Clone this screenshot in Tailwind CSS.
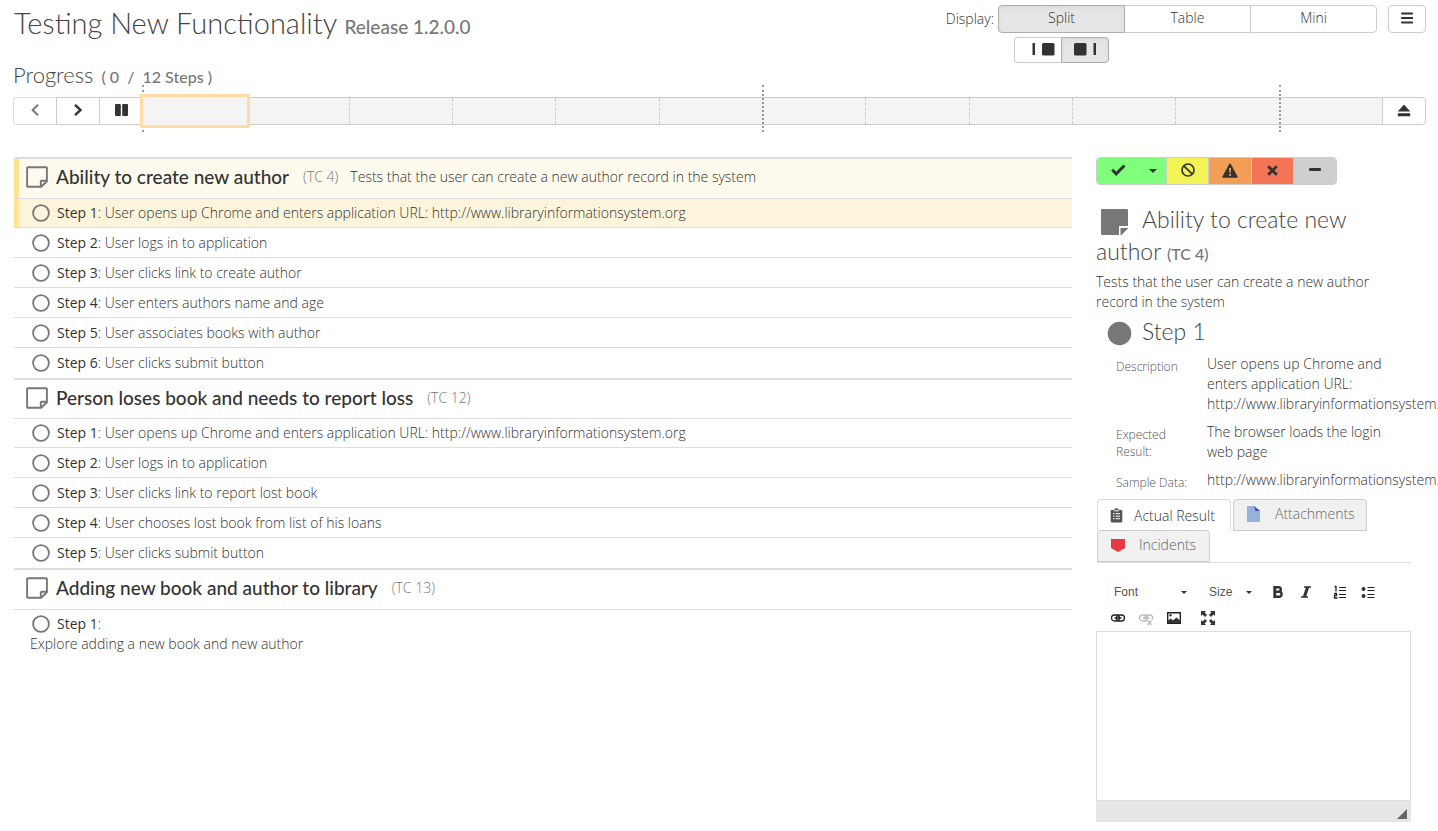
<!DOCTYPE html>
<html lang="en">
<head>
<meta charset="utf-8">
<meta name="viewport" content="width=device-width, initial-scale=1">
<title>Testing New Functionality</title>
<script src="https://cdn.jsdelivr.net/npm/@tailwindcss/browser@4"></script>
</head>
<body class="overflow-x-hidden bg-white font-['Open_Sans',sans-serif] text-sm leading-5 font-light text-[#333]">
<svg class="hidden" aria-hidden="true">
  <symbol id="note" viewBox="0 0 22 22"><path d="M2 1.200h18a.9.9 0 0 1 .9.9v13.200L15.300 20.800H2a.9.9 0 0 1-.9-.9V2.100a.9.9 0 0 1 .9-.9zM20.500 14.700h-4.800a.9.9 0 0 0-.9.9v4.800" fill="none" stroke="#777" stroke-width="1.900"/></symbol>
  <symbol id="ring" viewBox="0 0 18 18"><circle cx="9" cy="9" r="7.900" fill="none" stroke="#777" stroke-width="1.800"/></symbol>
</svg>

<header class="flex items-start justify-between pt-[5px] pr-3 pl-3.5">
  <h1 class="font-['Lato',sans-serif] text-[29px] leading-9 font-light text-[#444]">Testing New Functionality <small class="text-[19px] leading-none font-medium text-[#777]">Release 1.2.0.0</small></h1>
  <div class="flex items-start gap-[11px]">
    <div class="flex items-start gap-1">
      <span class="pt-1">Display:</span>
      <div>
        <div class="flex w-[379px]">
          <button class="h-7 flex-1 rounded-l border border-[#adadad] bg-[#e6e6e6] pb-0.5 inset-shadow-sm">Split</button>
          <button class="h-7 flex-1 border-y border-[#ccc] pb-0.5">Table</button>
          <button class="h-7 flex-1 rounded-r border border-[#ccc] pb-0.5">Mini</button>
        </div>
        <div class="mt-1 ml-4 flex">
          <button aria-label="Details on the left" class="flex h-[26px] w-[47px] items-center justify-end rounded-l border border-r-0 border-[#ccc] pr-1.5 pb-0.5"><svg width="24" height="14" viewBox="0 0 24 14" fill="#333"><path d="M1.500 1h2.500v12H1.500z"/><rect x="11" y="1" width="12.500" height="12.500" rx="1.500"/></svg></button>
          <button aria-label="Details on the right" class="flex h-[26px] w-12 items-center justify-center rounded-r border border-[#adadad] bg-[#e6e6e6] pb-0.5 inset-shadow-sm"><svg width="24" height="14" viewBox="0 0 24 14" fill="#333"><path d="M20.500 1h2.500v12h-2.500z"/><rect x="1" y="1" width="12.500" height="12.500" rx="1.500"/></svg></button>
        </div>
      </div>
    </div>
    <button aria-label="Menu" class="flex h-7 w-[38px] items-center justify-center rounded border border-[#ccc] pb-0.5"><svg width="12" height="12" viewBox="0 0 12 12" stroke="#333" stroke-width="2" stroke-linecap="round"><path d="M1 1.500h10.300M1 6h10.300M1 10.500h10.300"/></svg></button>
  </div>
</header>

<section class="pr-3 pl-[13px]">
  <h2 class="font-['Lato',sans-serif] text-[22px] leading-6 font-light text-[#444]">Progress <small class="ml-0.5 text-base leading-none font-medium whitespace-pre text-[#777]">( 0  /  12 Steps )</small></h2>
  <div class="mt-2.5 flex h-7">
    <button aria-label="Previous" class="flex w-[43px] items-center justify-center rounded-l border border-r-0 border-[#ddd] pb-0.5"><svg width="8" height="12" viewBox="0 0 8 12" fill="none" stroke="#777" stroke-width="2"><path d="M7 .8 1.600 6 7 11.200"/></svg></button>
    <button aria-label="Next" class="flex w-[43px] items-center justify-center border border-r-0 border-[#ccc] pb-0.5"><svg width="8" height="12" viewBox="0 0 8 12" fill="none" stroke="#333" stroke-width="2.400"><path d="M1 .8 6.400 6 1 11.200"/></svg></button>
    <button aria-label="Pause" class="flex w-[43px] items-center justify-center border border-r-0 border-[#ccc] pb-0.5"><svg width="13" height="12" viewBox="0 0 13 12" fill="#333"><rect width="5.800" height="12" rx="1"/><rect x="7.200" width="5.800" height="12" rx="1"/></svg></button>
    <div class="grid flex-1 grid-cols-12 border-y border-[#ccc] bg-[#f4f4f4]">
      <div class="relative">
        <span class="absolute -top-[13px] -bottom-2 left-0 border-l-2 border-dotted border-[#999]"></span>
        <span class="absolute -inset-y-1 -right-[5px] -left-0.5 border-[3px] border-[#ffdba6] bg-[#f4f4f4]"></span>
      </div>
      <div></div>
      <div class="border-l border-dashed border-[#ccc]"></div>
      <div class="border-l border-dashed border-[#ccc]"></div>
      <div class="border-l border-dashed border-[#ccc]"></div>
      <div class="border-l border-dashed border-[#ccc]"></div>
      <div class="relative"><span class="absolute -top-[13px] -bottom-2 left-0 border-l-2 border-dotted border-[#999]"></span></div>
      <div class="border-l border-dashed border-[#ccc]"></div>
      <div class="border-l border-dashed border-[#ccc]"></div>
      <div class="border-l border-dashed border-[#ccc]"></div>
      <div class="border-l border-dashed border-[#ccc]"></div>
      <div class="relative"><span class="absolute -top-[13px] -bottom-2 left-0 border-l-2 border-dotted border-[#999]"></span></div>
    </div>
    <button aria-label="Finish" class="flex w-11 items-center justify-center rounded-r border border-[#ccc] pb-0.5"><svg width="14" height="13" viewBox="0 0 14 13" fill="#333"><path d="M7 .5 13.200 7.500H.8z"/><rect x=".8" y="9.200" width="12.400" height="3" rx=".5"/></svg></button>
  </div>
</section>

<main class="mt-8 flex gap-6 pl-3.5">
  <div class="min-w-0 flex-1">
    <section>
      <div class="flex h-[41px] items-center border-t-2 border-[#ddd] bg-[#fefaee] pb-1 shadow-[inset_5px_0_0_#fbe594]">
        <svg class="ml-3 size-[22px]"><use href="#note"/></svg>
        <h3 class="ml-2 font-['Lato',sans-serif] text-[19px] leading-5 font-medium">Ability to create new author</h3>
        <span class="ml-3.5 text-[#777]">(TC 4)</span><span class="ml-3">Tests that the user can create a new author record in the system</span>
      </div>
      <ol>
        <li class="flex h-[30px] items-center gap-[7px] border-y border-[#ddd] bg-[#fdf5db] pl-[18px] shadow-[inset_5px_0_0_#fbe594]"><svg class="size-[18px]"><use href="#ring"/></svg><p><b class="font-normal">Step 1</b>: User opens up Chrome and enters application URL: http://www.libraryinformationsystem.org</p></li>
        <li class="flex h-[30px] items-center gap-[7px] border-b border-[#ddd] pl-[18px]"><svg class="size-[18px]"><use href="#ring"/></svg><p><b class="font-normal">Step 2</b>: User logs in to application</p></li>
        <li class="flex h-[30px] items-center gap-[7px] border-b border-[#ddd] pl-[18px]"><svg class="size-[18px]"><use href="#ring"/></svg><p><b class="font-normal">Step 3</b>: User clicks link to create author</p></li>
        <li class="flex h-[30px] items-center gap-[7px] border-b border-[#ddd] pl-[18px]"><svg class="size-[18px]"><use href="#ring"/></svg><p><b class="font-normal">Step 4</b>: User enters authors name and age</p></li>
        <li class="flex h-[30px] items-center gap-[7px] border-b border-[#ddd] pl-[18px]"><svg class="size-[18px]"><use href="#ring"/></svg><p><b class="font-normal">Step 5</b>: User associates books with author</p></li>
        <li class="flex h-[30px] items-center gap-[7px] pl-[18px]"><svg class="size-[18px]"><use href="#ring"/></svg><p><b class="font-normal">Step 6</b>: User clicks submit button</p></li>
      </ol>
    </section>
    <section>
      <div class="flex h-10 items-center border-t-2 border-[#ddd] pb-0.5">
        <svg class="ml-3 size-[22px]"><use href="#note"/></svg>
        <h3 class="ml-2 font-['Lato',sans-serif] text-[19px] leading-5 font-medium">Person loses book and needs to report loss</h3>
        <span class="ml-3.5 text-[#777]">(TC 12)</span>
      </div>
      <ol>
        <li class="flex h-[30px] items-center gap-[7px] border-y border-[#ddd] pl-[18px]"><svg class="size-[18px]"><use href="#ring"/></svg><p><b class="font-normal">Step 1</b>: User opens up Chrome and enters application URL: http://www.libraryinformationsystem.org</p></li>
        <li class="flex h-[30px] items-center gap-[7px] border-b border-[#ddd] pl-[18px]"><svg class="size-[18px]"><use href="#ring"/></svg><p><b class="font-normal">Step 2</b>: User logs in to application</p></li>
        <li class="flex h-[30px] items-center gap-[7px] border-b border-[#ddd] pl-[18px]"><svg class="size-[18px]"><use href="#ring"/></svg><p><b class="font-normal">Step 3</b>: User clicks link to report lost book</p></li>
        <li class="flex h-[30px] items-center gap-[7px] border-b border-[#ddd] pl-[18px]"><svg class="size-[18px]"><use href="#ring"/></svg><p><b class="font-normal">Step 4</b>: User chooses lost book from list of his loans</p></li>
        <li class="flex h-[30px] items-center gap-[7px] pl-[18px]"><svg class="size-[18px]"><use href="#ring"/></svg><p><b class="font-normal">Step 5</b>: User clicks submit button</p></li>
      </ol>
    </section>
    <section>
      <div class="flex h-[41px] items-center border-t-2 border-[#ddd] pb-1">
        <svg class="ml-3 size-[22px]"><use href="#note"/></svg>
        <h3 class="ml-2 font-['Lato',sans-serif] text-[19px] leading-5 font-medium">Adding new book and author to library</h3>
        <span class="ml-3.5 text-[#777]">(TC 13)</span>
      </div>
      <ol>
        <li class="border-t border-[#ddd] pt-1">
          <div class="flex items-center gap-[7px] pl-[18px]"><svg class="size-[18px]"><use href="#ring"/></svg><p><b class="font-normal">Step 1</b>:</p></div>
          <p class="pl-4">Explore adding a new book and new author</p>
        </li>
      </ol>
    </section>
  </div>

  <aside class="w-[342px] shrink-0 pr-[27px]">
    <div class="flex h-7 w-[241px] overflow-hidden rounded border border-[#ccc]">
      <button aria-label="Pass" class="flex w-[43px] items-center justify-center border-r border-[#ccc] bg-[#80ff7c] pb-0.5"><svg width="15" height="12" viewBox="0 0 15 12" fill="none" stroke="#333" stroke-width="3"><path d="m1.200 5.800 4 4L13.500 1.500"/></svg></button>
      <button aria-label="More pass options" class="flex w-[27px] items-center justify-center border-r border-[#ccc] bg-[#80ff7c]"><svg width="8" height="4" fill="#333"><path d="M0 0h8L4 4z"/></svg></button>
      <button aria-label="Block" class="flex w-[42px] items-center justify-center border-r border-[#ccc] bg-[#f4f356] pb-0.5"><svg width="14" height="14" viewBox="0 0 14 14" fill="none" stroke="#333" stroke-width="1.700"><circle cx="7" cy="7" r="6"/><path d="m2.800 2.800 8.400 8.400"/></svg></button>
      <button aria-label="Caution" class="flex w-[43px] items-center justify-center border-r border-[#ccc] bg-[#f29e56] pb-0.5"><svg width="16" height="15" viewBox="0 0 16 15"><path d="M8 1.200 15 14H1z" fill="#333" stroke="#333" stroke-width="1.500" stroke-linejoin="round"/><path d="M7 5h2l-.4 5H7.400zM7 11h2v1.800H7z" fill="#f29e56"/></svg></button>
      <button aria-label="Fail" class="flex w-[42px] items-center justify-center border-r border-[#ccc] bg-[#f47457] pb-0.5"><svg width="11" height="11" viewBox="0 0 11 11" stroke="#333" stroke-width="2.700"><path d="m1.200 1.200 8.600 8.600M9.800 1.200 1.200 9.800"/></svg></button>
      <button aria-label="Not applicable" class="flex flex-1 items-center justify-center bg-[#cfcfcf] pb-1"><svg width="12" height="3" fill="#333"><rect width="12" height="3" rx="1"/></svg></button>
    </div>

    <h2 class="mt-[19px] font-['Lato',sans-serif] text-[23px] leading-[30px] font-light text-[#444]"><svg class="mr-3.5 ml-1 inline-block align-middle" width="28" height="28" viewBox="0 0 28 28" fill="#777"><path d="M2 1h25a1 1 0 0 1 1 1v16h-9v9H2a1 1 0 0 1-1-1V2a1 1 0 0 1 1-1zM20.500 20H28v.5L21.500 27h-1z"/></svg>Ability to create new author <small class="text-base leading-none font-medium text-[#777]">(TC 4)</small></h2>
    <p class="mt-1.5">Tests that the user can create a new author record in the system</p>
    <h2 class="mt-1 flex items-center font-['Lato',sans-serif] text-[23px] leading-[30px] font-light text-[#444]"><svg class="mt-1 mr-2.5 ml-[11px]" width="25" height="25" viewBox="0 0 25 25"><circle cx="12.500" cy="12.500" r="11.800" fill="#777"/></svg>Step 1</h2>
    <dl class="mt-2 grid grid-cols-[75px_1fr] gap-x-4 gap-y-2 pl-5">
      <dt class="pt-1 text-xs leading-[17px] text-[#555]">Description</dt>
      <dd class="w-[187px]">User opens up Chrome and enters application URL: http://www.libraryinformationsystem.org</dd>
      <dt class="pt-1 text-xs leading-[17px] text-[#555]">Expected Result:</dt>
      <dd class="w-[187px]">The browser loads the login web page</dd>
      <dt class="pt-1 text-xs leading-[17px] text-[#555]">Sample Data:</dt>
      <dd class="w-[187px]">http://www.libraryinformationsystem.org</dd>
    </dl>

    <nav role="tablist" class="mt-2 ml-px flex flex-wrap gap-x-0.5 border-b border-[#ddd]">
      <button role="tab" aria-selected="true" class="flex h-8 w-[134px] items-center gap-[11px] rounded-t border border-b-0 border-[#ddd] pl-3 text-[#333]"><svg width="13" height="15" viewBox="0 0 13 15"><path d="M1.500 2H4a2.500 1.800 0 0 1 5 0h2.500a.8.8 0 0 1 .8.8v11a.8.8 0 0 1-.8.800h-10a.8.8 0 0 1-.8-.8v-11a.8.8 0 0 1 .8-.8z" fill="#555"/><path d="M3 5.700h1.500M5.500 5.700H10M3 8.200h1.500M5.500 8.200H10M3 10.700h1.500M5.500 10.700H10M4 2.800h5" stroke="#fff"/></svg>Actual Result</button>
      <button role="tab" aria-selected="false" class="flex h-8 w-[134px] items-center gap-3.5 rounded-t border border-[#ccc] bg-[#f1f1f1] pb-0.5 pl-3 text-[#666]"><svg width="15" height="16" viewBox="0 0 15 16"><path d="M1 0h7l6 5v11H1z" fill="#97b3dc"/><path d="m8 0 6 5H9.500z" fill="#4a41bd"/></svg>Attachments</button>
      <button role="tab" aria-selected="false" class="-mt-px flex h-8 w-[113px] items-center gap-3.5 rounded-t border border-[#ccc] bg-[#f1f1f1] pb-0.5 pl-[13px] text-[#666]"><svg width="14" height="14" viewBox="0 0 14 14"><path d="M0 1h14v9l-7 4-7-4z" fill="#e73846"/></svg>Incidents</button>
    </nav>

    <div class="mt-4 font-['Liberation_Sans',sans-serif] font-normal">
      <div class="flex h-[26px] items-center pl-[18px]">
        <label class="flex w-[73px] items-center justify-between text-xs text-[#555]"><select aria-label="Font" class="w-14 appearance-none"><option>Font</option></select><svg width="6" height="3" fill="#333"><path d="M0 0h6L3 3z"/></svg></label>
        <label class="ml-[22px] flex w-[43px] items-center justify-between text-xs text-[#555]"><select aria-label="Size" class="w-8 appearance-none"><option>Size</option></select><svg width="6" height="3" fill="#333"><path d="M0 0h6L3 3z"/></svg></label>
        <button aria-label="Bold" class="ml-3 flex w-7 justify-center"><svg width="16" height="16" viewBox="0 0 16 16"><path d="M4.500 3.200h4a2.200 2.200 0 0 1 0 4.600h-4zm0 4.600h4.600a2.500 2.500 0 0 1 0 5H4.500zM5 3v10" fill="none" stroke="#333" stroke-width="2.400"/></svg></button>
        <button aria-label="Italic" class="flex w-7 justify-center"><svg width="16" height="16" viewBox="0 0 16 16"><path d="M6 3h7M3 13h7" stroke="#333" stroke-width="1.600"/><path d="M9.700 3 6.300 13" stroke="#333" stroke-width="3"/></svg></button>
        <button aria-label="Numbered list" class="ml-1.5 flex w-7 justify-center"><svg width="16" height="16" viewBox="0 0 16 16" fill="none" stroke="#222"><path d="M7 3.500h7M7 6.500h7M7 10.500h7M7 13.500h7"/><path d="M2.500 2.500H4v5M2 9.500h2.500v2H2.500v2.500h3" stroke-width="1.300"/></svg></button>
        <button aria-label="Bulleted list" class="flex w-7 justify-center"><svg width="16" height="16" viewBox="0 0 16 16"><path d="M7.500 3.500h7M7.500 6.500h7M7.500 10.500h7M7.500 13.500h7" stroke="#222"/><circle cx="3.500" cy="5" r="2" fill="#333"/><circle cx="3.500" cy="12" r="2" fill="#333"/></svg></button>
      </div>
      <div class="flex h-[26px] items-center pl-2">
        <button aria-label="Link" class="flex w-7 justify-center"><svg width="16" height="16" viewBox="0 0 16 16" fill="none" stroke="#222" stroke-width="1.300"><rect x="1.500" y="5" width="8" height="6" rx="3"/><rect x="6.500" y="5" width="8" height="6" rx="3"/><path d="M4.500 8h7" stroke-width="1.500"/></svg></button>
        <button aria-label="Unlink" class="flex w-7 justify-center" disabled><svg width="16" height="16" viewBox="0 0 16 16" fill="none" stroke="#bbb" stroke-width="1.300"><rect x="1.500" y="5" width="8" height="6" rx="3"/><path d="M7 9.500a3 3 0 0 1 2.500-4.500H12a2.700 2.700 0 0 1 2 4.500M4.500 8h7M9.500 10.500l4 4.500M13.500 10.500l-4 4.500"/></svg></button>
        <button aria-label="Image" class="flex w-7 justify-center"><svg width="16" height="16" viewBox="0 0 16 16"><path d="M1.700 2.700h12.600v10.600H1.700z" fill="none" stroke="#222" stroke-width="1.400"/><path d="M2 13v-2.500l3-2 2 2 3.500-3 3.500 3V13z" fill="#333"/><circle cx="4.500" cy="5.300" r="1.200" fill="#333"/></svg></button>
        <button aria-label="Maximize" class="ml-1.5 flex w-7 justify-center"><svg width="16" height="16" viewBox="0 0 16 16"><path d="M1 1h5L4.600 2.600 7 5 5 7 2.600 4.600 1 6zM15 1v5l-1.600-1.400L11 7 9 5l2.400-2.400L10 1zM1 15v-5l1.600 1.400L5 9l2 2-2.400 2.400L6 15zM15 15h-5l1.400-1.600L9 11l2-2 2.400 2.400L15 10z" fill="#333"/></svg></button>
      </div>
      <textarea aria-label="Actual Result" class="block h-[170px] w-full resize-none border border-[#ddd] p-2 outline-none"></textarea>
      <div class="flex h-[21px] items-end justify-end bg-[#e6e6e6] pr-1 pb-[3px]"><svg width="10" height="10" fill="#666"><path d="M10 0v10H0z"/></svg></div>
    </div>
  </aside>
</main>
</body>
</html>
